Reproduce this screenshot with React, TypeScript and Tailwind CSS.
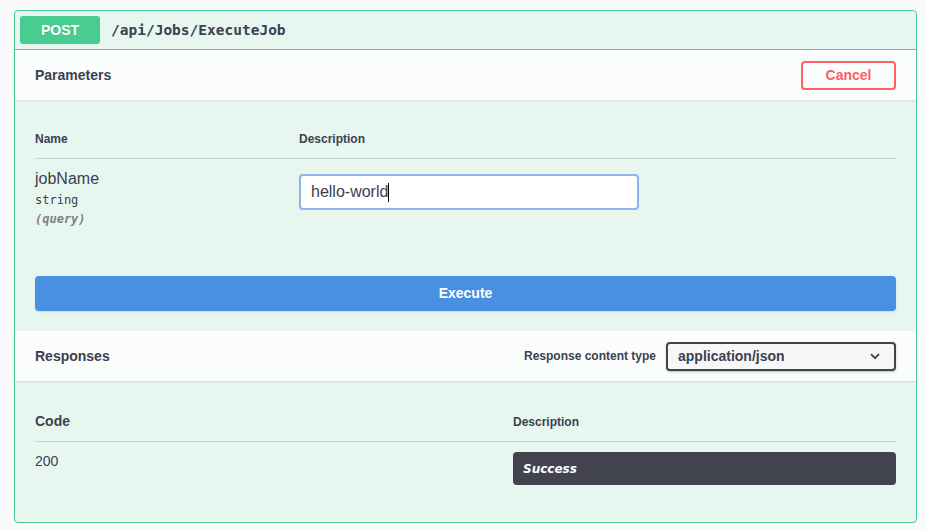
import React from 'react';

const SANS = "font-['Liberation_Sans',Arial,sans-serif]";
const MONO = "font-['DejaVu_Sans_Mono',monospace]";

export default function App() {
  return (
    <div className={`min-h-[530px] w-[927px] bg-[#fafafa] pt-[10px] pl-[14px] text-[#3b4151] ${SANS}`}>
      <div className="w-[903px] h-[513px] rounded-[4px] border border-[#49cc90] bg-[#e8f6f0] flex flex-col">
        {/* summary */}
        <div className="flex items-center h-[39px] p-[5px] border-b border-[#49cc90]">
          <div className="w-[80px] h-[28px] rounded-[3px] bg-[#49cc90] flex items-center justify-center text-white text-[14px] font-bold [text-shadow:0_1px_0_rgba(0,0,0,0.1)]">
            POST
          </div>
          <span className={`ml-[11px] pt-[2px] text-[14.5px] font-bold ${MONO}`}>/api/Jobs/ExecuteJob</span>
        </div>

        {/* parameters header */}
        <div className="h-[50px] flex items-center justify-between px-[20px] bg-white/80 shadow-[0_1px_2px_rgba(0,0,0,0.1)]">
          <h4 className="text-[14px] font-bold">Parameters</h4>
          <button className="w-[95px] h-[29px] rounded-[4px] border-2 border-[#ff6060] text-[#ff6060] text-[14px] font-bold bg-transparent">
            Cancel
          </button>
        </div>

        {/* parameters table */}
        <div className="px-[20px] pt-[20px]">
          <div className="flex border-b border-[#c4d3cc] h-[39px] items-center text-[12px] font-bold">
            <div className="w-[264px]">Name</div>
            <div>Description</div>
          </div>
          <div className="flex pt-[10px] h-[117px]">
            <div className="w-[264px] pt-[1px]">
              <div className="text-[16px] leading-[18px]">jobName</div>
              <div className={`text-[12px] mt-[5px] leading-[14px] ${MONO}`}>string</div>
              <div className={`text-[12px] italic font-semibold text-[#808080] mt-[5px] leading-[14px] ${MONO}`}>(query)</div>
            </div>
            <div className="mt-[5px] w-[340px] h-[36px] rounded-[4px] border-2 border-[#8cb2ef] bg-white flex items-center px-[10px]">
              <span className="text-[16px]">hello-world</span>
              <span className="w-px h-[19px] bg-black" />
            </div>
          </div>
        </div>

        {/* execute */}
        <div className="px-[20px] pb-[20px]">
          <button className="w-full h-[35px] rounded-[4px] bg-[#4990e2] text-white text-[14px] font-bold shadow-[0_1px_2px_rgba(0,0,0,0.1)]">
            Execute
          </button>
        </div>

        {/* responses header */}
        <div className="h-[50px] flex items-center justify-between px-[20px] bg-white/80 shadow-[0_1px_2px_rgba(0,0,0,0.1)]">
          <h4 className="text-[14px] font-bold">Responses</h4>
          <div className="flex items-center gap-[10px]">
            <span className="text-[12px] font-bold">Response content type</span>
            <div className="w-[230px] h-[29px] rounded-[4px] border-2 border-[#41444e] bg-[#f7f7f7] shadow-[0_1px_2px_rgba(0,0,0,0.25)] flex items-center justify-between pl-[10px] pr-[14px]">
              <span className="text-[14px] font-bold">application/json</span>
              <svg width="10" height="7" viewBox="0 0 10 7" fill="none">
                <path d="M1 1.2 5 5.2 9 1.2" stroke="#3b4151" strokeWidth="1.8" />
              </svg>
            </div>
          </div>
        </div>

        {/* responses table */}
        <div className="px-[20px] pt-[21px]">
          <div className="flex border-b border-[#c4d3cc] h-[40px] items-center font-bold">
            <div className="w-[478px] text-[14px]">Code</div>
            <div className="text-[12px]">Description</div>
          </div>
          <div className="flex pt-[10px]">
            <div className="w-[478px] text-[14px] leading-[16px] pt-[1px]">200</div>
            <div className="flex-1 h-[33px] rounded-[4px] bg-[#41444e] flex items-center px-[10px]">
              <em className="text-white text-[12px] font-bold font-['DejaVu_Sans',sans-serif]">Success</em>
            </div>
          </div>
        </div>
      </div>
    </div>
  );
}
